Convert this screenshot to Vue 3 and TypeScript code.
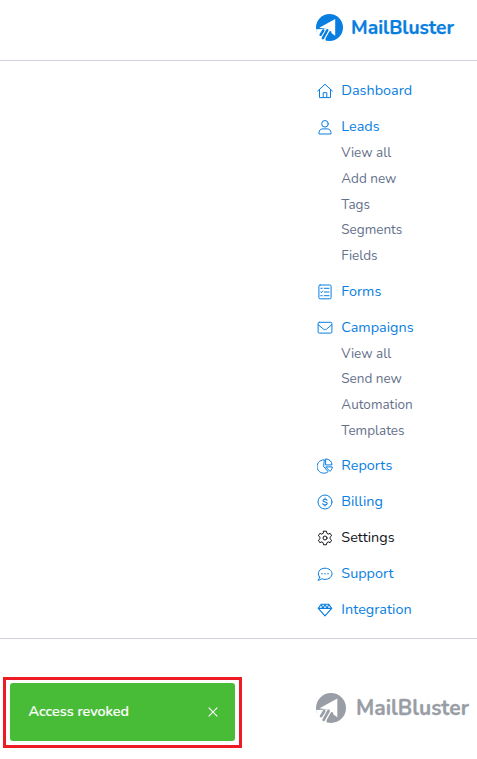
<script setup lang="ts">
interface NavItem { label: string; icon: string; active?: boolean; children?: string[] }

const items: NavItem[] = [
  { label: 'Dashboard', icon: 'home' },
  { label: 'Leads', icon: 'user', children: ['View all', 'Add new', 'Tags', 'Segments', 'Fields'] },
  { label: 'Forms', icon: 'form' },
  { label: 'Campaigns', icon: 'mail', children: ['View all', 'Send new', 'Automation', 'Templates'] },
  { label: 'Reports', icon: 'pie' },
  { label: 'Billing', icon: 'dollar' },
  { label: 'Settings', icon: 'gear', active: true },
  { label: 'Support', icon: 'chat' },
  { label: 'Integration', icon: 'gem' },
]
</script>

<template>
  <div class="page">
    <header class="header">
      <a class="brand">
        <svg class="mark" viewBox="0 0 27 27">
          <circle cx="13.5" cy="13.5" r="13.5" fill="currentColor" />
          <path d="M3.2 13.8 19.2 5V21.8L14.2 18.2 12.8 15.2Z" fill="#fff" />
          <path d="M0 15.2 12.8 14.8 14.3 17 9.5 27H6L2 23Z" fill="#fff" />
          <path d="M7.3 16.4 4.6 20.8M11.3 16.2 6.9 24.2M14.3 18.4 10.6 25.2" stroke="currentColor" stroke-width="2.5" stroke-linecap="round" />
        </svg>
        <svg class="word" viewBox="0 0 104 26"><text x="0" y="19.4" textLength="103" lengthAdjust="spacingAndGlyphs">MailBluster</text></svg>
      </a>
    </header>

    <nav class="nav">
      <div v-for="item in items" :key="item.label" class="group">
        <a class="item" :class="{ active: item.active }">
          <svg class="icon" viewBox="0 0 16 16">
            <template v-if="item.icon === 'home'">
              <path d="M.7 8 8 1.3 15.3 8M2.5 6.6v8h11v-8M6.2 14.5V9.7h3.6v4.8" />
            </template>
            <template v-else-if="item.icon === 'user'">
              <circle cx="8" cy="4.8" r="3.3" />
              <path d="M2 14.6v-1.1c0-2.2 1.7-3.6 3.8-3.6h4.4c2.1 0 3.8 1.4 3.8 3.6v1.1Z" />
            </template>
            <template v-else-if="item.icon === 'form'">
              <rect x="1.9" y="1" width="12.2" height="13.8" rx="1.2" />
              <path d="M7.2 4.3h4.8M7.2 8h4.8M7.2 11.7h4.8M3.8 4.3h1.4M3.8 11.7h1.4M3.7 7.9l.7.8 1.2-1.6" />
            </template>
            <template v-else-if="item.icon === 'mail'">
              <rect x="1.1" y="2.3" width="13.8" height="10.8" rx="1.2" />
              <path d="m1.3 4.8 5.3 4.4c.8.7 2 .7 2.8 0l5.3-4.4" />
            </template>
            <template v-else-if="item.icon === 'pie'">
              <path d="M6.9 1.8a6.7 6.7 0 1 0 4.2 11.8L6.9 8.9ZM9 .9a6 6 0 0 1 6 6H9ZM9 8.9h6.3c0 1.6-.8 3-2 4.2Z" />
            </template>
            <template v-else-if="item.icon === 'dollar'">
              <circle cx="8" cy="8" r="7" />
              <path class="bold" d="M10 6.2c-.4-.7-1.1-1-2-1-1.2 0-2 .5-2 1.3 0 2.1 4.2.9 4.2 3 0 .9-.9 1.4-2.1 1.4-1.1 0-1.9-.4-2.3-1.2M8 4v1M8 11v1" />
            </template>
            <template v-else-if="item.icon === 'gear'">
              <path d="M6.6 1.2h2.8l.5 2.1 1.3.8 2-.7 1.4 2.4L13 7.3v1.4l1.6 1.5-1.4 2.4-2-.7-1.3.8-.5 2.1H6.6l-.5-2.1-1.3-.8-2 .7-1.4-2.4L3 8.7V7.3L1.4 5.8l1.4-2.4 2 .7 1.3-.8Z" />
              <circle cx="8" cy="8" r="2" />
            </template>
            <template v-else-if="item.icon === 'chat'">
              <path d="M2.6 11.2C-.7 7 2.5 2.2 8 2.2c4 0 7 2.5 7 5.6s-3 5.6-7 5.6c-1.1 0-2.2-.2-3.1-.6-1.1.9-2.4 1.4-4 1.4.9-.8 1.6-1.8 1.7-3Z" />
              <path class="dots" d="M5 7.8h.01M8 7.8h.01M11 7.8h.01" />
            </template>
            <template v-else>
              <path class="bold" d="M4.2 2.3h7.6l2.9 4.1L8 13.9 1.3 6.4ZM1.3 6.4h13.4M4.4 2.5l1.4 3.7L8 2.8l2.2 3.4 1.4-3.7" />
            </template>
          </svg>
          <span>{{ item.label }}</span>
        </a>
        <div v-if="item.children" class="sub">
          <a v-for="child in item.children" :key="child" class="subitem">{{ child }}</a>
        </div>
      </div>
    </nav>

    <footer class="footer">
      <div class="highlight">
        <div class="toast">
          <span>Access revoked</span>
          <svg class="close" viewBox="0 0 10 10"><path d="m.7.7 8.6 8.6M9.3.7.7 9.3" /></svg>
        </div>
      </div>
      <a class="brand muted">
        <svg class="mark" viewBox="0 0 27 27">
          <circle cx="13.5" cy="13.5" r="13.5" fill="currentColor" />
          <path d="M3.2 13.8 19.2 5V21.8L14.2 18.2 12.8 15.2Z" fill="#fff" />
          <path d="M0 15.2 12.8 14.8 14.3 17 9.5 27H6L2 23Z" fill="#fff" />
          <path d="M7.3 16.4 4.6 20.8M11.3 16.2 6.9 24.2M14.3 18.4 10.6 25.2" stroke="currentColor" stroke-width="2.5" stroke-linecap="round" />
        </svg>
        <svg class="word" viewBox="0 0 104 26"><text x="0" y="19.6" textLength="103" lengthAdjust="spacingAndGlyphs">MailBluster</text></svg>
      </a>
    </footer>
  </div>
</template>

<style>
body { background: #fff; }
</style>

<style scoped>
.page { width: 477px; height: 759px; overflow: hidden; background: #fff; font-family: Nunito, "Open Sans", sans-serif; }
.header { height: 60px; box-sizing: content-box; border-bottom: 1px solid #cfd1e0; padding-left: 316px; }
.brand { display: flex; align-items: center; gap: 8px; height: 55px; color: #087ee1; }
.mark { width: 27px; height: 27px; flex: none; fill: none; }
.word { width: 104px; height: 26px; flex: none; overflow: visible; }
.word text { font: 700 19.4px Nunito, Roboto, sans-serif; fill: currentColor; stroke: currentColor; stroke-width: .25; }
.nav { height: 578px; box-sizing: border-box; padding: 11.6px 0 0 316px; border-bottom: 1px solid #cfd1e0; }
.item { display: flex; align-items: center; gap: 8.3px; height: 36px; color: #087ee1; font-size: 14.4px; line-height: 21px; white-space: nowrap; }
.item.active { color: #12151a; }
.icon { width: 16px; height: 16px; margin: 1px 0 0 1px; flex: none; fill: none; stroke: currentColor; stroke-width: 1; stroke-linejoin: round; stroke-linecap: round; }
.icon .bold { stroke-width: 1.1; }
.icon .dots { stroke-width: 1.4; }
.sub { margin: -4.75px 0 4.75px 25.3px; }
.subitem { display: flex; align-items: center; height: 25.7px; color: #64708b; font-size: 13.5px; line-height: 21px; white-space: nowrap; }
.footer { display: flex; padding: 38px 0 0 3px; }
.highlight { width: 239px; height: 71px; box-sizing: border-box; border: 3px solid #ed1c24; padding: 3px 4px; flex: none; }
.toast { display: flex; align-items: center; justify-content: space-between; width: 225px; height: 58px; box-sizing: border-box; padding: 0 17.5px 0 18.5px; border-radius: 3px; background: #49bc37; color: #fff; font-size: 14.4px; font-weight: 500; line-height: 20px; }
.toast span { margin-bottom: 3px; -webkit-text-stroke: .2px #fff; }
.close { width: 10px; height: 10px; fill: none; stroke: #fff; stroke-width: 1.1; }
.muted { color: #999da5; height: 62px; margin-left: 74px; gap: 9.5px; }
.muted .mark { width: 30px; height: 30px; }
.muted .word { width: 114px; height: 28.5px; }
</style>
